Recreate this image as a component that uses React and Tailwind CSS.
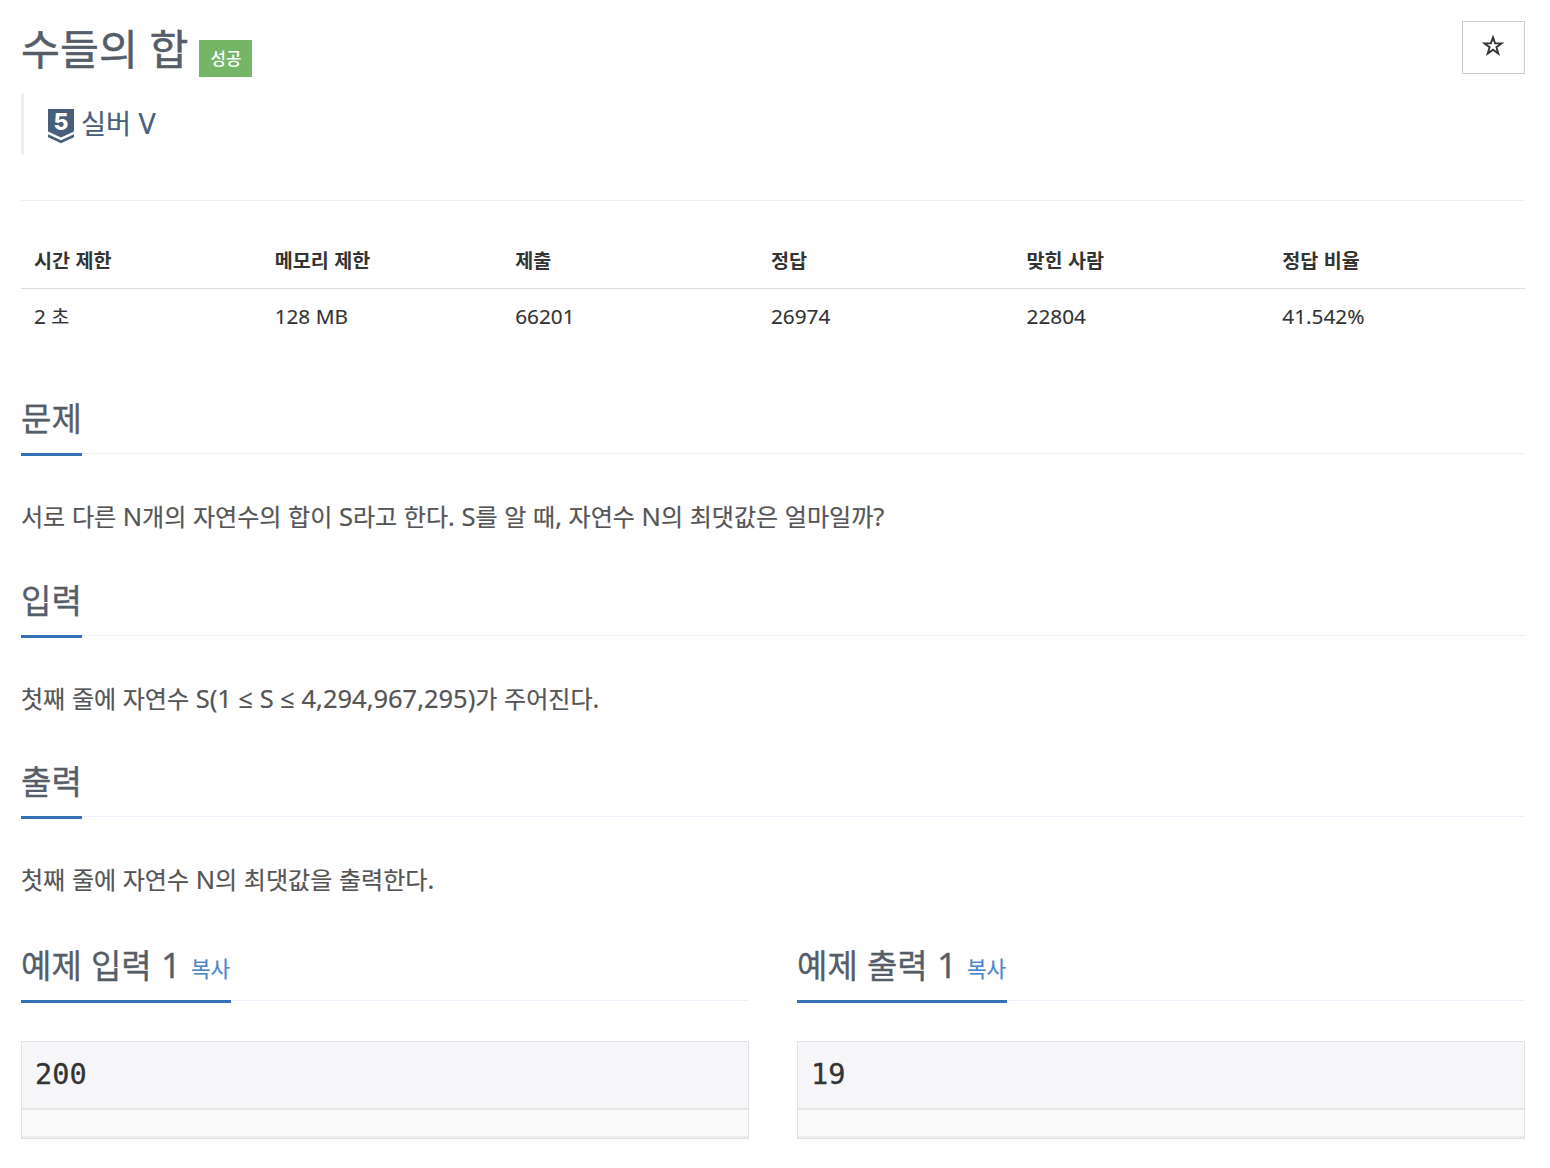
import React from 'react';

const info = [
  { label: '시간 제한', value: '2 초', col: 'w-[16%]' },
  { label: '메모리 제한', value: '128 MB', col: 'w-[16%]' },
  { label: '제출', value: '66201', col: 'w-[17%]' },
  { label: '정답', value: '26974', col: 'w-[17%]' },
  { label: '맞힌 사람', value: '22804', col: 'w-[17%]' },
  { label: '정답 비율', value: '41.542%', col: 'w-[17%]' },
];

const sections = [
  {
    title: '문제',
    body: '서로 다른 N개의 자연수의 합이 S라고 한다. S를 알 때, 자연수 N의 최댓값은 얼마일까?',
    line: 'border-[#e4e4e4]',
  },
  { title: '입력', body: '첫째 줄에 자연수 S(1 ≤ S ≤ 4,294,967,295)가 주어진다.', line: 'border-[#e4e4e4]' },
  { title: '출력', body: '첫째 줄에 자연수 N의 최댓값을 출력한다.', line: 'border-[#e4e4f0]' },
];

const samples = [
  { title: '예제 입력 1', data: '200' },
  { title: '예제 출력 1', data: '19' },
];

// Hangul is set a little smaller than the latin letters around it
function Ko({ children }) {
  return children.split(/([가-힣]+)/).map((part, i) =>
    /[가-힣]/.test(part) ? (
      <span key={i} className="text-[0.945em]">{part}</span>
    ) : (
      part
    )
  );
}

function TierIcon() {
  return (
    <div className="relative mt-px h-[35px] w-[26px]">
      <svg width="26" height="35" viewBox="0 0 26 35" fill="#485f7c">
        <path d="M0 0H26V22.5L13 28.5L0 22.5Z" />
        <path d="M0 25.2L13 31.2L26 25.2V28.2L13 34.2L0 28.2Z" />
      </svg>
      <span className="absolute inset-x-0 top-0 text-center font-['Inter',sans-serif] text-[23px] leading-[27px] font-extrabold text-white">5</span>
    </div>
  );
}

function Headline({ title, line, copy }) {
  return (
    <div className={`flex h-[52px] border-b border-dotted ${line}`}>
      <h2 className="h-[54px] shrink-0 border-b-3 border-[#3071b9] text-[35px] leading-[32px] whitespace-nowrap text-[#555d69] [-webkit-text-stroke:0.3px]">
        <Ko>{title}</Ko>
        {copy && (
          <button className="relative -top-px ml-[10px] pr-px text-[22.6px] leading-none text-[#4a86c8] [-webkit-text-stroke:0.2px]">
            <Ko>복사</Ko>
          </button>
        )}
      </h2>
    </div>
  );
}

function App() {
  return (
    <div className="min-h-[1168px] bg-white px-[21px] pr-[25px] font-['Noto_Sans','Open_Sans','Noto_Sans_CJK_KR',sans-serif] text-[#333]">
      <header className="flex h-[93px] items-start justify-between pt-[21px]">
        <div className="flex items-start">
          <h1 className="text-[44.8px] leading-[53px] text-[#555d69] [-webkit-text-stroke:0.5px]"><Ko>수들의 합</Ko></h1>
          <span className="mt-[19px] ml-[11px] flex h-[37px] w-[53px] items-center justify-center bg-[#75b566] text-[17.8px] font-medium text-white">
            <Ko>성공</Ko>
          </span>
        </div>
        <button className="flex h-[53px] w-[63px] items-center justify-center border border-[#ccc]">
          <svg width="24" height="24" viewBox="0 0 24 24" fill="none" stroke="#333" strokeWidth="1.9" className="mr-[2px] mb-[3px]">
            <path d="M12 3.4L14.1 9.4H20.5L15.4 13.2L17.3 19.5L12 15.7L6.7 19.5L8.6 13.2L3.5 9.4H9.9Z" />
          </svg>
        </button>
      </header>

      <blockquote className="flex h-[61px] border-l-3 border-[#eee] pt-[15px] pl-6 text-[#485f7c]">
        <TierIcon />
        <span className="ml-[7px] text-[28.8px] leading-[29px] [-webkit-text-stroke:0.2px]"><Ko>실버 V</Ko></span>
      </blockquote>

      <hr className="mt-[46px] border-[#eee]" />

      <table className="mt-[31px] w-full table-fixed text-left text-[20.75px]">
        <thead>
          <tr className="h-[56px] border-b border-[#ddd]">
            {info.map((item) => (
              <th key={item.label} className={`${item.col} px-[13px] pt-0.5 font-bold`}><Ko>{item.label}</Ko></th>
            ))}
          </tr>
        </thead>
        <tbody>
          <tr className="h-[55px]">
            {info.map((item) => (
              <td key={item.label} className="px-[13px] pt-0.5 [-webkit-text-stroke:0.1px]"><Ko>{item.value}</Ko></td>
            ))}
          </tr>
        </tbody>
      </table>

      <main className="pt-[59px]">
        {sections.map((s) => (
          <section key={s.title} className="h-[181.5px]">
            <Headline title={s.title} line={s.line} />
            <p className="pt-[43px] text-[25.47px] leading-[39px] text-[#555] [-webkit-text-stroke:0.2px]"><Ko>{s.body}</Ko></p>
          </section>
        ))}

        <div className="grid grid-cols-2 gap-12 pt-[2.5px]">
          {samples.map((s) => (
            <section key={s.title}>
              <Headline title={s.title} line="border-[#e4e4f0]" copy />
              <pre className="mt-10 h-[98px] border border-[#e1e1e6] bg-[#fafafa] font-['DejaVu_Sans_Mono',monospace] text-[28.6px]">
                <code className="block h-[68px] border-b-2 border-[#e6e6e6] bg-[#f6f6f9] pl-[13px] font-['DejaVu_Sans_Mono',monospace] leading-[64px] [-webkit-text-stroke:0.3px]">{s.data}</code>
                <span className="block h-7 border-b-2 border-[#ededed]" />
              </pre>
            </section>
          ))}
        </div>
      </main>
    </div>
  );
}

export default App;
